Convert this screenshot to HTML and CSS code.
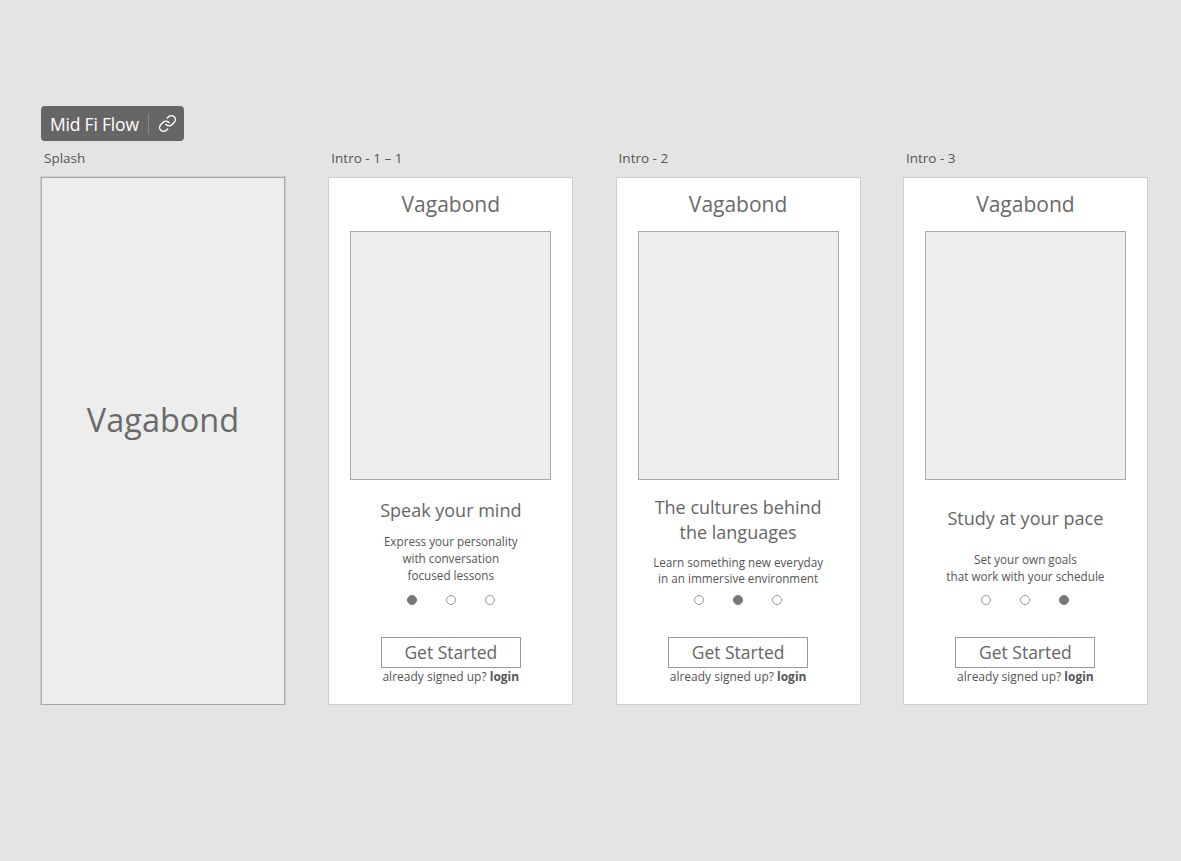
FILE: index.html
```html
<!DOCTYPE html>
<html lang="en">
<head>
  <meta charset="UTF-8">
  <title>Mid Fi Flow</title>
  <link rel="stylesheet" href="styles.css">
</head>
<body>
  <div class="board">
    <div class="flow-badge">
      <span class="flow-name">Mid Fi Flow</span>
      <span class="flow-sep"></span>
      <svg class="flow-link" viewBox="0 0 24 24" width="19" height="19" fill="none" stroke="#fff" stroke-width="1.8" stroke-linecap="round" stroke-linejoin="round">
        <path d="M10 13a5 5 0 0 0 7.54.54l3-3a5 5 0 0 0-7.07-7.07l-1.72 1.71"/>
        <path d="M14 11a5 5 0 0 0-7.54-.54l-3 3a5 5 0 0 0 7.07 7.07l1.71-1.71"/>
      </svg>
    </div>

    <div class="frames">
      <div class="frame">
        <div class="frame-label">Splash</div>
        <div class="screen splash">
          <div class="splash-title">Vagabond</div>
        </div>
      </div>

      <div class="frame">
        <div class="frame-label">Intro - 1 – 1</div>
        <div class="screen">
          <div class="app-title">Vagabond</div>
          <div class="picture"></div>
          <div class="copy copy-1">
            <div class="heading">Speak your mind</div>
            <div class="blurb">Express your personality<br>with conversation<br>focused lessons</div>
          </div>
          <div class="dots">
            <span class="dot on"></span><span class="dot"></span><span class="dot"></span>
          </div>
          <div class="start-btn">Get Started</div>
          <div class="signin">already signed up? <b>login</b></div>
        </div>
      </div>

      <div class="frame">
        <div class="frame-label">Intro - 2</div>
        <div class="screen">
          <div class="app-title">Vagabond</div>
          <div class="picture"></div>
          <div class="copy copy-2">
            <div class="heading">The cultures behind<br>the languages</div>
            <div class="blurb">Learn something new everyday<br>in an immersive environment</div>
          </div>
          <div class="dots">
            <span class="dot"></span><span class="dot on"></span><span class="dot"></span>
          </div>
          <div class="start-btn">Get Started</div>
          <div class="signin">already signed up? <b>login</b></div>
        </div>
      </div>

      <div class="frame">
        <div class="frame-label">Intro - 3</div>
        <div class="screen">
          <div class="app-title">Vagabond</div>
          <div class="picture"></div>
          <div class="copy copy-3">
            <div class="heading">Study at your pace</div>
            <div class="blurb">Set your own goals<br>that work with your schedule</div>
          </div>
          <div class="dots">
            <span class="dot"></span><span class="dot"></span><span class="dot on"></span>
          </div>
          <div class="start-btn">Get Started</div>
          <div class="signin">already signed up? <b>login</b></div>
        </div>
      </div>
    </div>
  </div>
</body>
</html>
```

FILE: styles.css
```css
body {
  margin: 0;
  background-color: #e4e4e4;
  font-family: "Open Sans", "Noto Sans", sans-serif;
  color: #666;
}
.board {
  padding: 106px 0 0 41px;
}
.flow-badge {
  display: inline-flex;
  align-items: center;
  height: 35px;
  padding: 0 7px 0 9px;
  background-color: #666;
  border-radius: 4px;
  color: #fff;
}
.flow-name {
  font-size: 17.5px;
  letter-spacing: -0.2px;
}
.flow-sep {
  width: 1px;
  height: 20px;
  margin: 0 9px 0 9px;
  background-color: #888;
}
.flow-link {
  display: block;
}
.frames {
  display: grid;
  grid-template-columns: repeat(4, 245px);
  column-gap: 42.3px;
  margin-top: 9px;
}
.frame-label {
  height: 16px;
  line-height: 16px;
  font-size: 13.5px;
  color: #555;
  padding-left: 3px;
  margin-bottom: 11px;
}
.screen {
  box-sizing: border-box;
  height: 528px;
  background-color: #fff;
  border: 1px solid #cfcfcf;
  display: flex;
  flex-direction: column;
  align-items: center;
  text-align: center;
}
.splash {
  width: 244px;
  background-color: #ededed;
  border: 1px solid #a9a9a9;
  box-shadow: 0 0 0 1px #cdcdcd;
  justify-content: center;
  padding-bottom: 42px;
}
.splash-title {
  font-size: 32.5px;
  line-height: 40px;
  color: #6a6a6a;
}
.app-title {
  margin-top: 11px;
  height: 30px;
  line-height: 30px;
  font-size: 21px;
  color: #6a6a6a;
}
.picture {
  box-sizing: border-box;
  width: 201px;
  height: 249px;
  margin-top: 12px;
  background-color: #eee;
  border: 1px solid #aaa;
}
.copy {
  height: 114px;
  box-sizing: border-box;
}
.copy-1 { padding-top: 18px; }
.copy-2 { padding-top: 15px; }
.copy-3 { padding-top: 26px; }
.heading {
  font-size: 18px;
  line-height: 25px;
  color: #666;
}
.blurb {
  margin-top: 10px;
  font-size: 11.7px;
  line-height: 17px;
  color: #555;
}
.copy-2 .blurb {
  margin-top: 9px;
  line-height: 16px;
}
.copy-3 .blurb {
  margin-top: 20px;
}
.dots {
  display: flex;
  gap: 29px;
  height: 12px;
  align-items: center;
}
.dot {
  box-sizing: border-box;
  width: 10px;
  height: 10px;
  border-radius: 50%;
  border: 1px solid #999;
  background-color: #fff;
}
.dot.on {
  background-color: #777;
  border-color: #777;
}
.start-btn {
  box-sizing: border-box;
  width: 140px;
  height: 31px;
  margin-top: 31px;
  border: 1px solid #999;
  font-size: 17.5px;
  line-height: 29px;
  color: #666;
}
.signin {
  margin-top: 1px;
  font-size: 12px;
  line-height: 16px;
  color: #555;
}
.signin b {
  color: #555;
}
```
